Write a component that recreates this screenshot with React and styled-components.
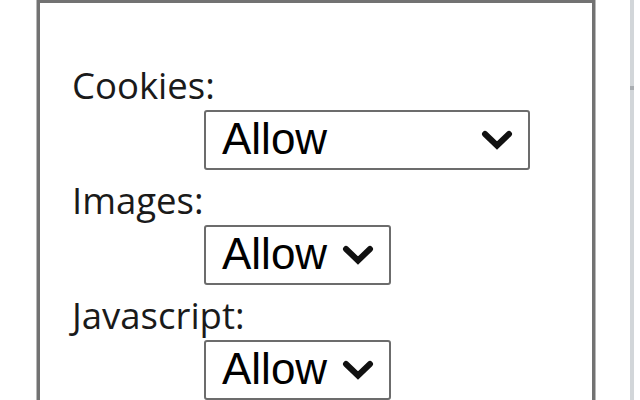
import React from "react";
import styled, { createGlobalStyle } from "styled-components";

const GlobalStyle = createGlobalStyle`
  html, body {
    margin: 0;
    padding: 0;
    background: #ffffff;
    overflow: hidden;
  }
`;

const Page = styled.div`
  display: flex;
  align-items: flex-start;
  gap: 35px;
  height: 400px;
  padding-left: 37px;
  box-sizing: border-box;
  overflow: hidden;
`;

const Panel = styled.div`
  flex: 0 0 auto;
  width: 558px;
  height: 440px;
  box-sizing: border-box;
  border: 3px solid #727272;
  border-bottom: none;
  box-shadow: 0 0 0 1px #b9b9b9;
  padding: 52px 0 0 32px;
  background: #ffffff;
  display: flex;
  flex-direction: column;
`;

const Field = styled.div`
  display: flex;
  flex-direction: column;
  align-items: flex-start;
`;

const Label = styled.label`
  font-family: "Open Sans", "Noto Sans", sans-serif;
  font-size: 36.5px;
  line-height: 49px;
  padding-top: 6px;
  color: #1a1a1a;
  white-space: nowrap;
`;

const SelectBox = styled.div`
  margin-left: 132px;
  width: ${(p) => p.$width}px;
  height: 60px;
  box-sizing: border-box;
  border: 2px solid #6c6c6c;
  border-radius: 3px;
  background: #ffffff;
  display: flex;
  align-items: center;
  justify-content: space-between;
  padding: 0 15px 0 16px;
  font-family: "Liberation Sans", Arial, sans-serif;
  font-size: 44px;
  color: #000000;
`;

const Value = styled.span`
  line-height: 1;
  margin-top: -2px;
`;

const Divider = styled.div`
  flex: 0 0 auto;
  width: 4px;
  height: 400px;
  background: linear-gradient(
    to bottom,
    #d2d6d9 0px,
    #d2d6d9 86px,
    #a9adb1 86px,
    #a9adb1 90px,
    #d2d6d9 90px
  );
`;

const Chevron = () => (
  <svg width="32" height="21" viewBox="0 0 32 21" aria-hidden="true">
    <path
      d="M4 4 L16 15.5 L28 4"
      fill="none"
      stroke="#111111"
      strokeWidth="6"
      strokeLinecap="round"
      strokeLinejoin="miter"
    />
  </svg>
);

const fields = [
  { label: "Cookies:", width: 326 },
  { label: "Images:", width: 187 },
  { label: "Javascript:", width: 187 },
];

export default function App() {
  return (
    <>
      <GlobalStyle />
      <Page>
        <Panel>
          {fields.map((f) => (
            <Field key={f.label}>
              <Label>{f.label}</Label>
              <SelectBox $width={f.width} role="combobox">
                <Value>Allow</Value>
                <Chevron />
              </SelectBox>
            </Field>
          ))}
        </Panel>
        <Divider />
      </Page>
    </>
  );
}
